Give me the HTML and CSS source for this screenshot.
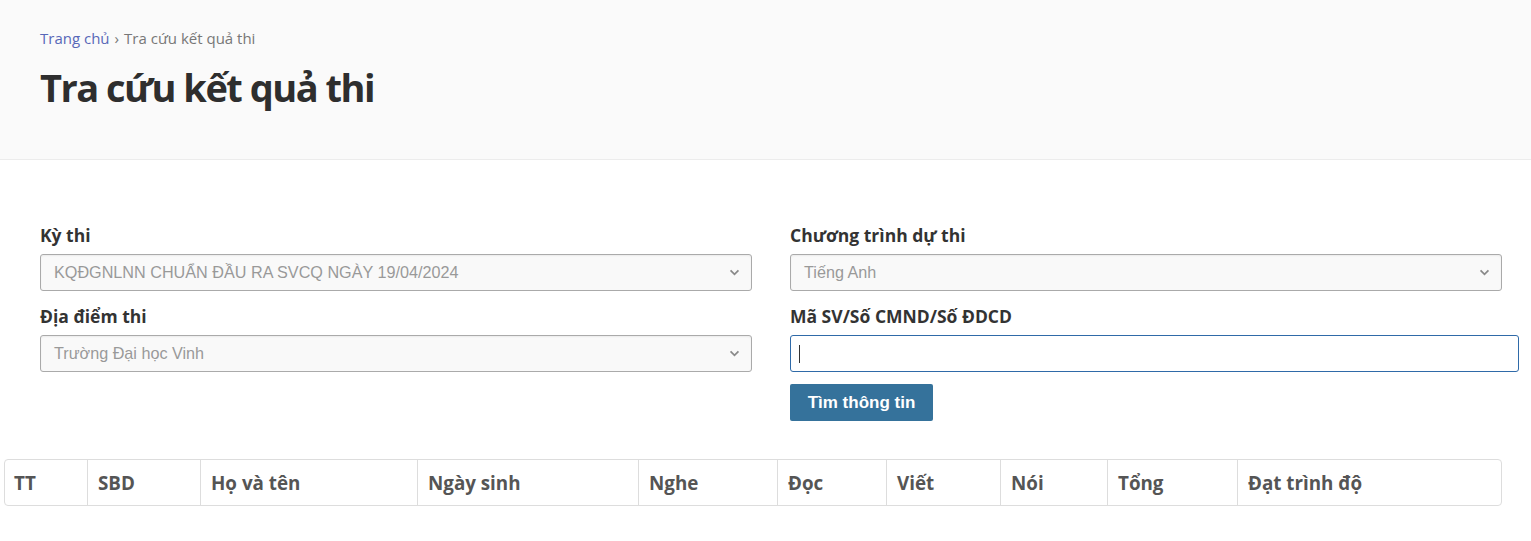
FILE: index.html
```html
<!DOCTYPE html>
<html lang="vi">
<head>
<meta charset="utf-8">
<title>Tra cứu kết quả thi</title>
<link rel="stylesheet" href="styles.css">
</head>
<body>
<header class="page-head">
  <nav class="crumbs"><a href="#" class="crumb-link">Trang chủ</a><span class="crumb-sep">›</span><span class="crumb-cur">Tra cứu kết quả thi</span></nav>
  <h1 class="page-title">Tra cứu kết quả thi</h1>
</header>
<main class="content">
  <form class="search-form">
    <div class="col col-left">
      <div class="field">
        <label class="lbl">Kỳ thi</label>
        <div class="select"><span class="select-text">KQĐGNLNN CHUẨN ĐẦU RA SVCQ NGÀY 19/04/2024</span><svg class="chev" viewBox="0 0 12 8" width="11" height="7"><path d="M1.5 1.5 L6 6 L10.5 1.5" fill="none" stroke="#8a8a8a" stroke-width="2"/></svg></div>
      </div>
      <div class="field">
        <label class="lbl">Địa điểm thi</label>
        <div class="select"><span class="select-text">Trường Đại học Vinh</span><svg class="chev" viewBox="0 0 12 8" width="11" height="7"><path d="M1.5 1.5 L6 6 L10.5 1.5" fill="none" stroke="#8a8a8a" stroke-width="2"/></svg></div>
      </div>
    </div>
    <div class="col col-right">
      <div class="field">
        <label class="lbl">Chương trình dự thi</label>
        <div class="select"><span class="select-text">Tiếng Anh</span><svg class="chev" viewBox="0 0 12 8" width="11" height="7"><path d="M1.5 1.5 L6 6 L10.5 1.5" fill="none" stroke="#8a8a8a" stroke-width="2"/></svg></div>
      </div>
      <div class="field">
        <label class="lbl">Mã SV/Số CMND/Số ĐDCD</label>
        <div class="text-input"><span class="caret"></span></div>
      </div>
      <button type="button" class="btn">Tìm thông tin</button>
    </div>
  </form>
  <div class="table-wrap">
    <div class="thead">
      <div class="th w1">TT</div>
      <div class="th w2">SBD</div>
      <div class="th w3">Họ và tên</div>
      <div class="th w4">Ngày sinh</div>
      <div class="th w5">Nghe</div>
      <div class="th w6">Đọc</div>
      <div class="th w7">Viết</div>
      <div class="th w8">Nói</div>
      <div class="th w9">Tổng</div>
      <div class="th w10">Đạt trình độ</div>
    </div>
  </div>
</main>
</body>
</html>
```
FILE: styles.css
```css
html, body {
  margin: 0;
  padding: 0;
  background: #fff;
  font-family: "Open Sans", "Liberation Sans", sans-serif;
  color: #333;
}
.page-head {
  background: #fafafa;
  border-bottom: 1px solid #ececec;
  padding: 28px 40px 0;
  height: 131px;
}
.crumbs {
  font-size: 15px;
  line-height: 21px;
  color: #777;
}
.crumb-link {
  color: #5868b8;
  text-decoration: none;
}
.crumb-sep {
  margin: 0 5px;
  color: #777;
}
.page-title {
  margin: 13px 0 0;
  font-size: 38px;
  line-height: 50px;
  font-weight: 700;
  letter-spacing: -1.5px;
  color: #2e2e2e;
}
.content {
  padding: 64px 0 0;
}
.search-form {
  display: grid;
  grid-template-columns: 712px 729px;
  column-gap: 38px;
  padding: 0 0 0 40px;
}
.col {
  display: flex;
  flex-direction: column;
}
.field {
  display: flex;
  flex-direction: column;
  margin-bottom: 14px;
}
.lbl {
  font-weight: 700;
  font-size: 17.5px;
  line-height: 22px;
  color: #333;
  margin-bottom: 8px;
}
.select {
  width: 712px;
  box-sizing: border-box;
  height: 37px;
  border: 1px solid #aaa;
  border-radius: 3px;
  background: #f9f9f9;
  box-shadow: inset 0 1px 2px rgba(0,0,0,0.06);
  display: flex;
  align-items: center;
  justify-content: space-between;
  padding: 0 11px 0 13px;
}
.select-text {
  font-family: "Liberation Sans", Arial, sans-serif;
  font-size: 16.2px;
  color: #999;
}
.chev {
  display: block;
}
.text-input {
  width: 729px;
  box-sizing: border-box;
  height: 37px;
  border: 1px solid #2f6aa8;
  border-radius: 3px;
  background: #fff;
  display: flex;
  align-items: center;
  padding-left: 8px;
}
.caret {
  width: 1px;
  height: 18px;
  background: #333;
}
.btn {
  align-self: flex-start;
  margin-top: -2px;
  height: 37px;
  width: 143px;
  border: none;
  border-radius: 2px;
  background: #35729b;
  color: #fff;
  font-family: "Liberation Sans", Arial, sans-serif;
  font-weight: 700;
  font-size: 17px;
  padding: 0;
}
.table-wrap {
  margin: 38px 0 0 4px;
  width: 1498px;
  box-sizing: border-box;
  border: 1px solid #ddd;
  border-radius: 4px;
}
.thead {
  display: flex;
  height: 45px;
}
.th {
  box-sizing: border-box;
  border-left: 1px solid #ddd;
  padding: 0 10px;
  display: flex;
  align-items: center;
  font-weight: 700;
  font-size: 18.8px;
  color: #555;
}
.th.w1 { border-left: none; width: 82px; padding-left: 9px; }
.w2 { width: 113px; }
.w3 { width: 217px; }
.w4 { width: 221px; }
.w5 { width: 139px; }
.w6 { width: 109px; }
.w7 { width: 114px; }
.w8 { width: 107px; }
.w9 { width: 130px; }
.w10 { flex: 1; }
```
